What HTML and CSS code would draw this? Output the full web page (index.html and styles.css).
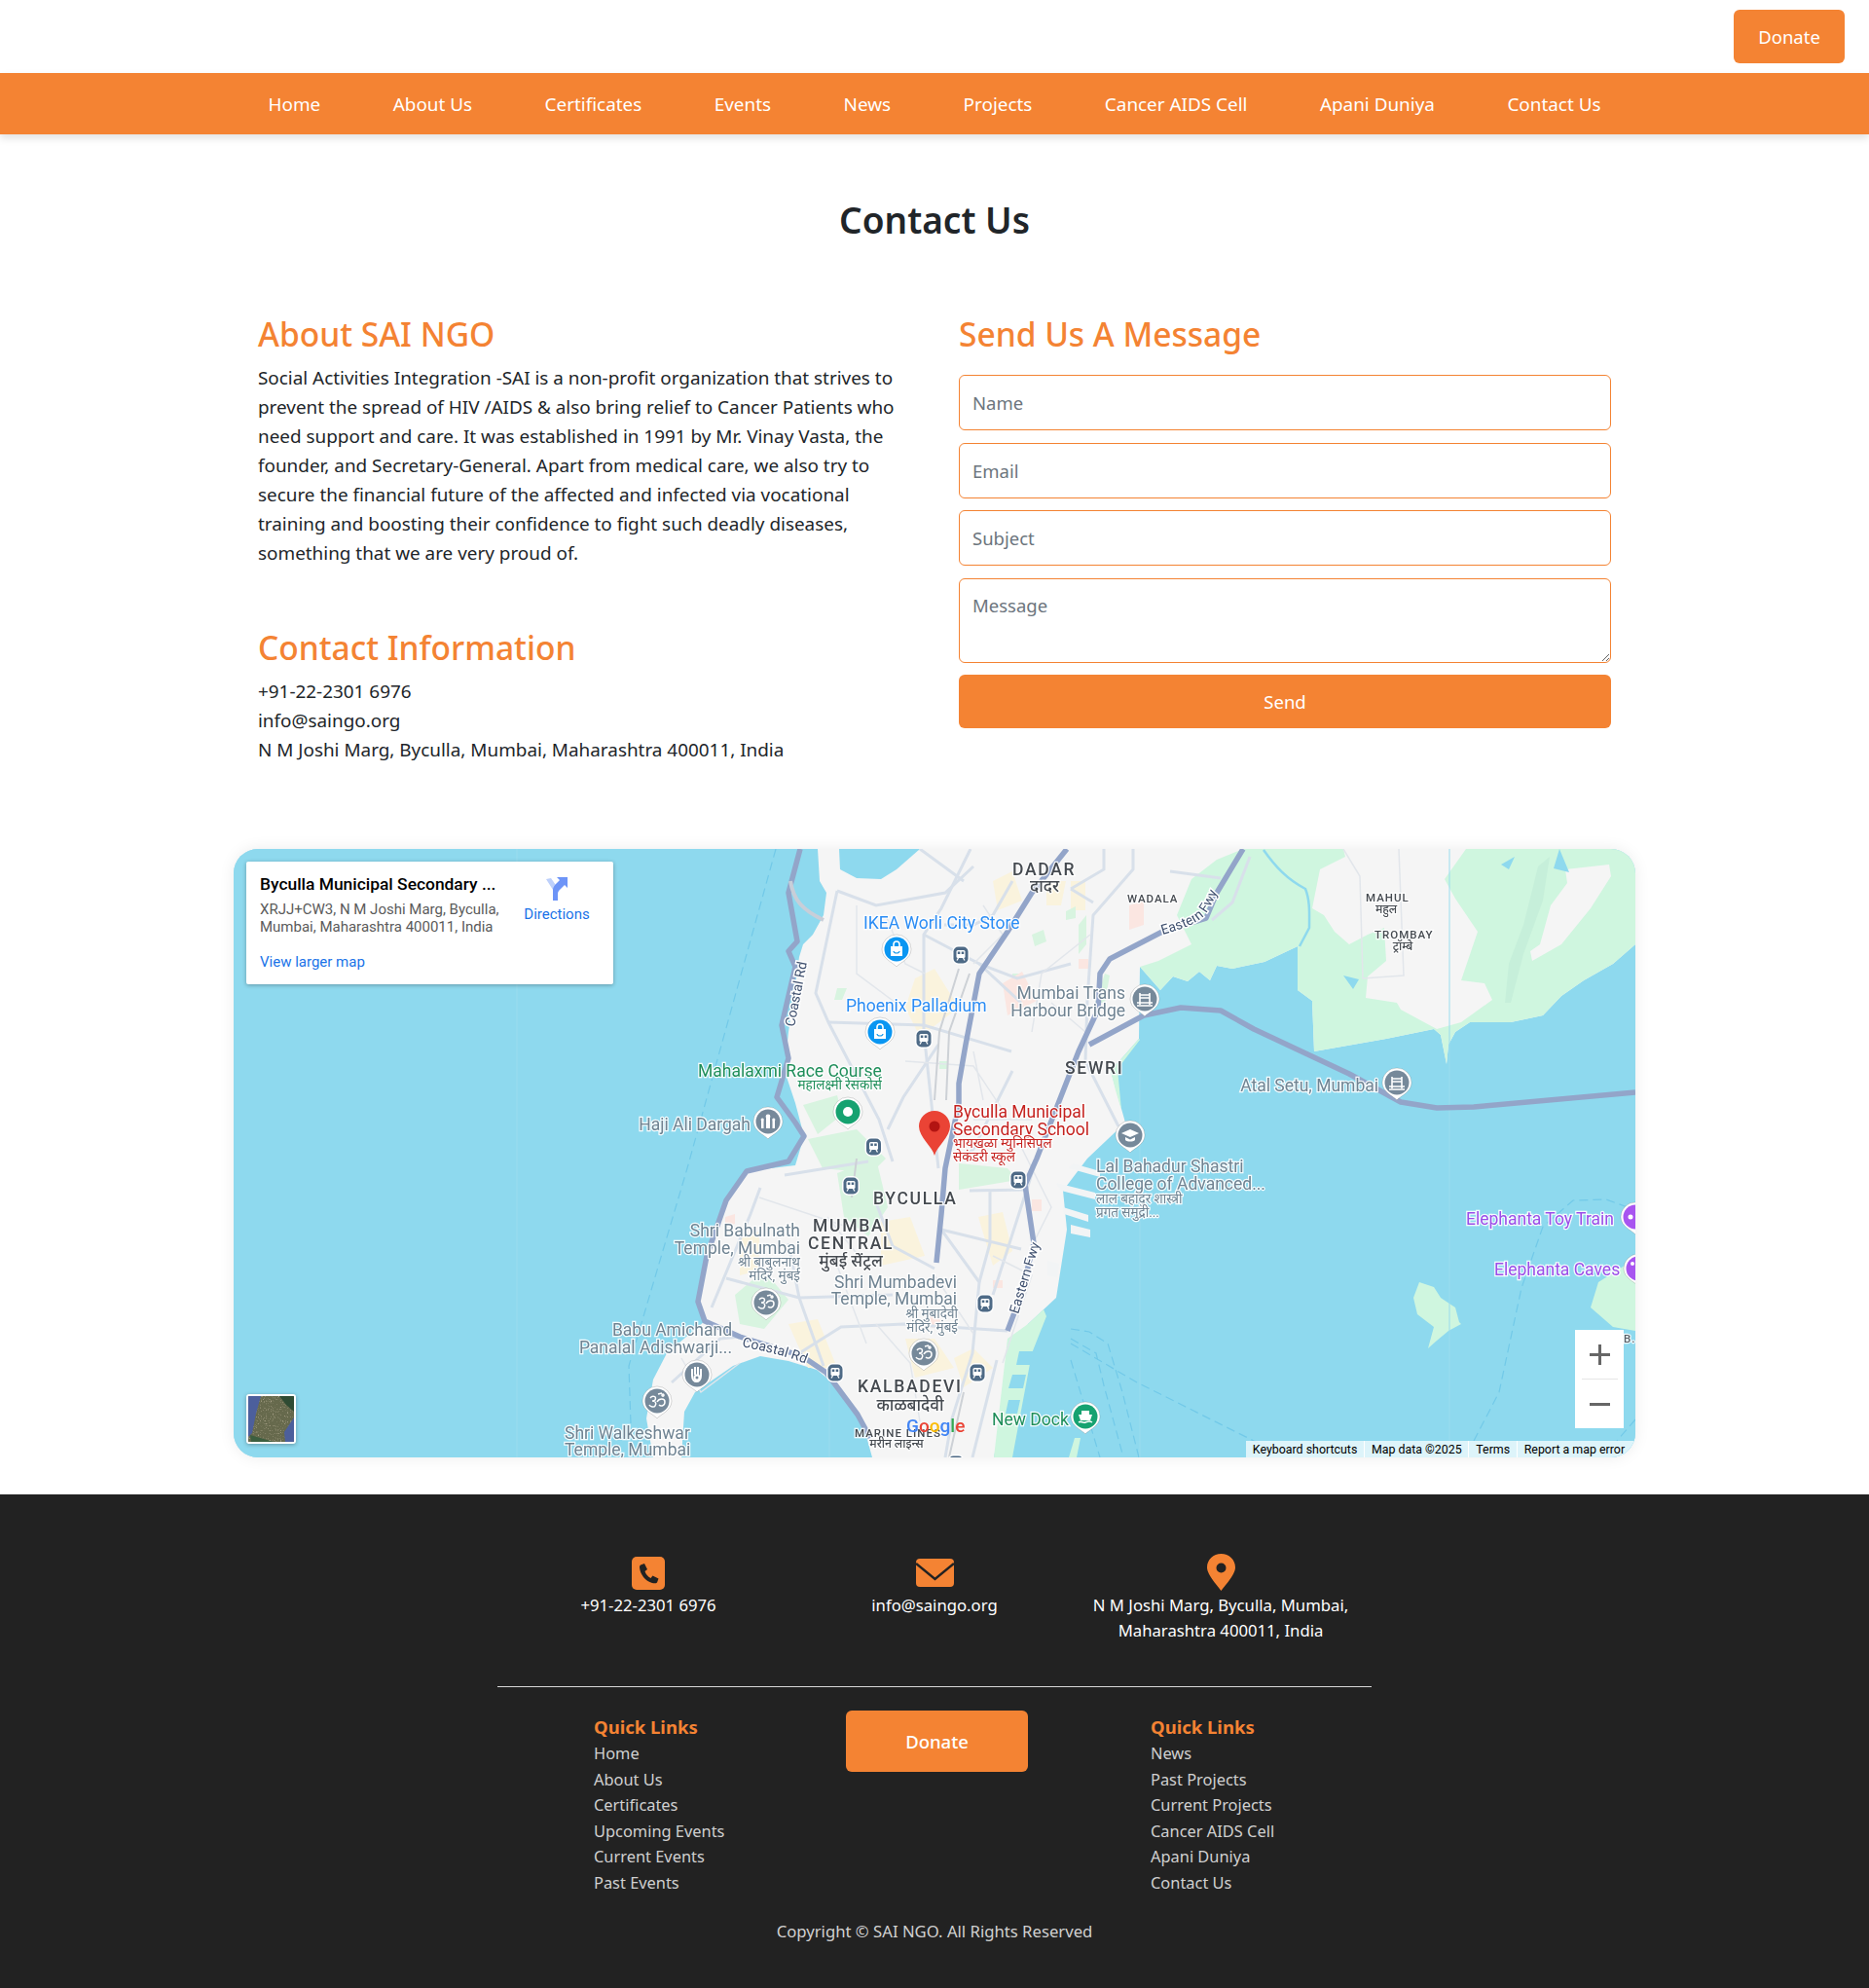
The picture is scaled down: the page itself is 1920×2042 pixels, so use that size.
FILE: index.html
```html
<!DOCTYPE html>
<html lang="en">
<head>
<meta charset="utf-8">
<title>Contact Us</title>
<link rel="stylesheet" href="styles.css">
</head>
<body>
<header class="topbar"><a class="btn btn-top" href="#">Donate</a></header>
<nav class="nav">
  <a href="#">Home</a><a href="#">About Us</a><a href="#">Certificates</a><a href="#">Events</a><a href="#">News</a><a href="#">Projects</a><a href="#">Cancer AIDS Cell</a><a href="#">Apani Duniya</a><a href="#">Contact Us</a>
</nav>
<main class="main">
  <h1 class="title">Contact Us</h1>
  <div class="cols">
    <section class="col">
      <h2 class="sec sec-l">About SAI NGO</h2>
      <p class="about">Social Activities Integration -SAI is a non-profit organization that strives to prevent the spread of HIV /AIDS &amp; also bring relief to Cancer Patients who need support and care. It was established in 1991 by Mr. Vinay Vasta, the founder, and Secretary-General. Apart from medical care, we also try to secure the financial future of the affected and infected via vocational training and boosting their confidence to fight such deadly diseases, something that we are very proud of.</p>
      <h2 class="sec sec-l sec-2">Contact Information</h2>
      <p class="info">+91-22-2301 6976<br>info@saingo.org<br>N M Joshi Marg, Byculla, Mumbai, Maharashtra 400011, India</p>
    </section>
    <section class="col">
      <h2 class="sec">Send Us A Message</h2>
      <form class="form">
        <input type="text" placeholder="Name">
        <input type="text" placeholder="Email">
        <input type="text" placeholder="Subject">
        <textarea placeholder="Message"></textarea>
        <button class="send" type="button">Send</button>
      </form>
    </section>
  </div>
  <div class="map">
    <svg class="map-svg" viewBox="240 872 1440 625" xmlns="http://www.w3.org/2000/svg">
      <defs>
        <g id="pin"><path class="pin-o" d="M0 18C-3 14-15 10-15 0a15 15 0 1 1 30 0C15 10 3 14 0 18Z"/><circle r="12.5" class="pin-c"/></g>
        <g id="transit"><rect x="-9" y="-10" width="18" height="20" rx="7" fill="#fff"/><rect x="-7.500" y="-8.500" width="15" height="17" rx="5" fill="#4e6a86"/><rect x="-4.500" y="-5" width="9" height="8" rx="1.500" fill="#fff"/><rect x="-3.200" y="-3.500" width="2.500" height="2.500" fill="#4e6a86"/><rect x=".7" y="-3.500" width="2.500" height="2.500" fill="#4e6a86"/><path d="M-2.500 3l-1.500 2.500M2.500 3l1.500 2.500" stroke="#fff" stroke-width="1.300"/></g>
        <g id="bag"><path d="M-6-3h12v10h-12z" fill="#fff"/><path d="M-3-3v-2a3 3 0 0 1 6 0v2" fill="none" stroke="#fff" stroke-width="1.600"/><path d="M-3 2a3 2 0 0 0 6 0" fill="none" stroke="#1a9ae8" stroke-width="1.200"/></g>
        <g id="om"><path d="M-7-3c2-3 7-2 5 2-1 1-2 1-3 1 3 0 5 2 3 5-1 2-5 1-6-1M0 1c2-4 8-4 8 0s-4 5-6 3M1-7l4-1M6-7a1 1 0 1 0 .01 0" fill="none" stroke="#fff" stroke-width="1.500"/></g>
        <g id="bridge"><path d="M-8 4h16M-8 7h16M-5-6v12M5-6v12M-5-4h10M-5-1h10" fill="none" stroke="#fff" stroke-width="1.600"/></g>
        <g id="temple"><path d="M-7 7V-1h2.500V7zM-2 7V-4h4V7zM4.500 7V-1h2.500V7z" fill="#fff"/><circle cy="-5" r="2.400" fill="#fff"/><circle cx="-5.800" cy="-2" r="1.600" fill="#fff"/><circle cx="5.800" cy="-2" r="1.600" fill="#fff"/></g>
        <g id="edu"><path d="M-9-2L0-6l9 4-9 4zM-5 2v3c2 2 8 2 10 0V2L0 4.500z" fill="#fff"/></g>
        <g id="hand"><path d="M-5 1V-6M-2 0V-8M1 0V-8M4 1V-6M-5 1c0 8 9 8 9 0" fill="none" stroke="#fff" stroke-width="2"/><circle cy="3" r="3.500" fill="#fff"/><circle cy="3" r="1.500" fill="#76899a"/></g>
        <g id="ferry"><path d="M-4-6h8v4h-8zM-7-2h14l-2 6h-10z" fill="#fff"/><path d="M-7 6c3-2 4 1 7 0s4-2 7 0" fill="none" stroke="#fff" stroke-width="1.500"/></g>
        <path id="fwy1" d="M1194 960 C1215 954 1232 948 1239 938 C1246 929 1250 917 1256 903"/>
        <path id="crd2" d="M762 1383 C785 1388 810 1393 830 1402"/>
      </defs>

      <rect x="240" y="872" width="1440" height="625" class="water"/>
      <path class="land" d="M840 872L842 905 849 917 846 940 835 960 825 970 821 983 815 1027 810 1060 806 1100 817 1133 826 1167 817 1197 767 1203 746 1233 728 1290 717 1337 724 1357 685 1390 671 1417 664 1457 671 1497 700 1497 703 1450 714 1430 753 1403 781 1393 810 1398 839 1407 864 1427 885 1457 896 1497 1021 1497 1039 1407 1056 1360 1085 1333 1096 1263 1092 1223 1117 1190 1156 1153 1141 1100 1170 1067 1171 993 1192 1017 1205 1003 1220 1008 1232 998 1243 1007 1250 992 1266 995 1299 988 1333 972 1333 1017 1348 1028 1350 1080 1424 1067 1473 1057 1480 1063 1486 1093 1488 1073 1495 1060 1510 1050 1552 1050 1585 1043 1604 1023 1627 1007 1657 990 1680 970 1680 872Z"/>
      <path class="water" d="M862 872L863 893 880 902 905 903 921 893 945 872Z"/>
      <path class="green" d="M1250 883L1224 903 1209 940 1224 970 1190 987 1171 993 1192 1017 1205 1003 1220 1008 1232 998 1243 1007 1250 992 1266 995 1299 988 1333 972 1333 1017 1348 1028 1350 1080 1424 1067 1473 1057 1480 1063 1486 1093 1488 1073 1495 1060 1510 1050 1552 1050 1585 1043 1604 1023 1627 1007 1657 990 1680 970 1680 872 1506 872 1484 903 1495 923 1518 957 1501 1007 1525 1010 1533 1027 1501 1050 1476 1057 1439 1037 1435 1030 1403 1025 1405 1003 1424 987 1422 953 1405 960 1386 970 1371 957 1360 940 1348 933 1356 893 1382 880 1380 872 1277 872Z"/>
      <path class="land" d="M1608 893L1653 888 1655 900 1634 933 1604 970 1574 987 1572 977 1582 970 1593 930 1610 907Z"/>
      <path class="green2" d="M1580 890L1592 880 1585 925 1565 980 1552 1030 1546 1030 1550 990 1565 950Z"/>
      <path class="green" d="M1141 1100L1170 1067 1171 1068 1148 1098 1152 1140 1146 1120Z"/>
      <path class="green" d="M1035 1375L1056 1360 1072 1345 1075 1352 1060 1390 1040 1497 1021 1497Z"/>
      <path class="water" d="M1380 1002L1396 1006 1390 1016ZM1542 888L1556 880 1550 893ZM1602 872L1612 896 1596 892Z"/>
      <path class="water-s" d="M1298 873C1310 890 1322 903 1341 913 1346 925 1345 940 1345 953L1335 972"/>
      <path class="green" d="M1458 1317L1473 1322 1480 1333 1495 1343 1499 1358 1501 1360 1488 1367 1476 1377 1467 1385 1473 1363 1456 1350 1452 1333ZM1680 1293L1642 1317 1634 1343 1657 1363 1680 1367Z"/>
      <path class="green" d="M1098 1497l6-20 6 0-4 20z"/>

      <path class="pier" d="M1085 1215l40 10v7l-35-9zM1092 1240l26 8v7l-25-8zM1102 1195l28 8v6l-32-9zM1100 1258l20 5v8l-20-4zM1076 1295l12 3-2 14-10-2z"/>
      <path class="water" d="M1047 1388h16l-3 14h-16zM1040 1412h14l-3 14h-15zM1036 1438h12l-3 14h-12z"/>
      <path class="dash" d="M797 872L706 1200 646 1403 649 1493M1514 1480L1540 1430 1563 1323 1585 1260 1616 1233 1650 1232 1680 1243M1100 1365L1119 1368 1138 1380 1153 1430 1170 1497M1100 1375L1126 1390 1134 1423 1153 1493M1100 1380L1168 1420 1288 1480 1310 1490M1100 1397L1130 1497M1680 1458L1661 1480"/>
      <path class="tile" d="M531 872V1497M1171 1100V1497M1489 872V1497M852 1420V1497"/>

      <path class="yellow" d="M1020 905l20-10 10 30-25 10zM940 1005l20-10 25 40-40 30-15-30zM1075 905l20 0-5 25-15 0zM1100 905l15 0 0 30-15 0zM905 1255l30-5 15 40-45 10zM1005 1250l25-5 10 40-20 15zM930 1375l30 0 20 30-40 10zM980 1395l20-10 20 20-30 20z M810 1360l30-5 20 50-30 0z M760 1270l20-5 0 40-20 5z"/>
      <path class="park" d="M1060 960l12-5 3 12-12 5zM1095 936l10-5 0 12-10 2zM1040 1000l8 0 0 10-8 2zM860 1015l10 0-5 12-8 0zM825 1135l35-10 5 20-25 20zM830 1170l50-10 30 30-15 15-50-5zM860 1205l40-15 12 50-20 30-25-20zM755 1330l30-25 25 30-25 30-25-5zM985 1195l50 5 10 12-60 10zM1135 1000l-10 30 10 0 5-28zM1108 950l8-10 0 30-8 10zM965 1090l8 0 0 8-8 0z"/>
      <path class="pink" d="M1030 1010l20-12 15 30-30 15zM1160 930l15-5 0 25-15 5zM745 1250l10-3 0 10-10 3zM1060 1232l10 0 0 12-10 0zM955 1350l10 0 2 14-10 0z M1020 1315l10 0 0 8-10 0z M1108 985l10 0 0 10-10 0z"/>

      <g class="roads">
        <path d="M860 915L838 1020 851 1050 903 1150 917 1193"/>
        <path d="M860 915L900 930 971 917 1000 890"/>
        <path d="M997 872L967 933 949 960 949 1060 964 1200"/>
        <path d="M949 960L1006 990 1049 1030"/>
        <path d="M851 1050L949 1053 1039 1080"/>
        <path d="M1006 990L1045 1005 1100 990"/>
        <path d="M964 1073L928 1127 912 1160"/>
        <path d="M806 1207L892 1193M781 1220L771 1247 731 1343"/>
        <path d="M810 1277L821 1333 846 1403M746 1313L821 1333 917 1330"/>
        <path d="M821 1390L864 1363 928 1360 1035 1367"/>
        <path d="M899 1233L917 1280 960 1303M967 1263L1006 1317 999 1390 978 1457 971 1497"/>
        <path d="M996 1223L1053 1222M1017 1223L1017 1277 1006 1317M967 1263L1049 1283M1024 1397L999 1497"/>
        <path d="M1134 872V893L1100 913M1202 895L1254 902M1164 872V893L1123 940 1117 1027 1115 1090 1149 1157"/>
        <path d="M1123 927L1100 913M1284 880L1266 927 1245 945"/>
        <path d="M1040 1100L1000 1180 990 1190M1065 1190L1020 1330M690 1420L740 1375 760 1373"/>
        <path d="M945 872L990 905M1040 905L1020 940 1000 950 970 950"/>
      </g>
      <g class="roads-thin">
        <path d="M880 930L880 1000 920 1030M910 940L930 990 950 1000M1010 930L1030 960 1000 990M1060 1060L1070 1000 1120 960M1000 1080L1010 1130M930 1090L1000 1095 1030 1140M780 1230L870 1260M850 1250L890 1300M860 1300L890 1380M960 1310L1000 1370M1050 1180L1080 1240 1060 1280M1020 1290L1060 1310 1030 1400M700 1395L720 1430 760 1400M1380 872L1397 900 1400 1005 1442 1002 1437 872M1080 1030L1115 1060M900 1360L935 1400 945 1460M1000 1150L1060 1150"/>
      </g>
      <g class="rail">
        <path d="M985 995L965 1060 960 1130M996 1000L975 1060 972 1130M880 1190L875 1230M990 1430L975 1497"/>
      </g>

      <g class="hwy">
        <path d="M822 872L810 917 819 967 810 977 817 993 803 1053 810 1087 798 1127 817 1153 826 1167 810 1193 767 1203 746 1233 726 1290 717 1337 724 1357 760 1373 824 1393 849 1410 881 1453 894 1477"/>
        <path d="M1096 872L1060 917 1035 957 1006 1000 992 1073 985 1113 985 1133 971 1200 967 1247 962 1297"/>
        <path d="M1277 872L1250 917 1239 943 1194 957 1140 985 1130 1000 1128 1037 1108 1080 1065 1190 1053 1217 1062 1277 1049 1330 1035 1367"/>
        <path d="M1119 1073L1175 1043 1213 1035 1254 1038 1288 1057 1386 1103 1439 1132 1476 1138 1514 1137 1680 1122"/>
      </g>
      <path class="hwy-l" d="M812 905C815 925 825 935 846 945"/>

      <g class="lbl-area">
        <text x="1040" y="899" class="a16">DADAR</text>
        <text x="1073" y="916" class="a16d mid">दादर</text>
        <text x="1094" y="1103" class="a16">SEWRI</text>
        <text x="897" y="1237" class="a16">BYCULLA</text>
        <text x="835" y="1265" class="a16">MUMBAI</text>
        <text x="830" y="1283" class="a16">CENTRAL</text>
        <text x="874" y="1301" class="a16d mid">मुंबई सेंट्रल</text>
        <text x="881" y="1430" class="a16">KALBADEVI</text>
        <text x="935" y="1449" class="a16d mid">काळबादेवी</text>
        <text x="878" y="1476" class="a12">MARINE LINES</text>
        <text x="921" y="1487" class="a12d mid">मरीन लाइन्स</text>
        <text x="1158" y="927" class="a12">WADALA</text>
        <text x="1403" y="926" class="a12">MAHUL</text>
        <text x="1424" y="938" class="a12d mid">महुल</text>
        <text x="1412" y="964" class="a12">TROMBAY</text>
        <text x="1441" y="976" class="a12d mid">ट्रॉम्बे</text>
      </g>

      <g class="lbl-road">
        <text transform="translate(816 1055) rotate(-79)">Coastal Rd</text>
        <text><textPath href="#crd2">Coastal Rd</textPath></text>
        <text><textPath href="#fwy1">Eastern Fwy</textPath></text>
        <text transform="translate(1046 1350) rotate(-73)">Eastern Fwy</text>
      </g>

      <g class="lbl lbl-grey">
        <text x="1156" y="1026" class="end">Mumbai Trans</text>
        <text x="1156" y="1044" class="end">Harbour Bridge</text>
        <text x="771" y="1161" class="end">Haji Ali Dargah</text>
        <text x="1416" y="1121" class="end">Atal Setu, Mumbai</text>
        <text x="1126" y="1204">Lal Bahadur Shastri</text>
        <text x="1126" y="1222">College of Advanced...</text>
        <text x="1126" y="1236" class="d13">लाल बहादुर शास्त्री</text>
        <text x="1126" y="1250" class="d13">प्रगत समुद्री...</text>
        <text x="822" y="1270" class="end">Shri Babulnath</text>
        <text x="822" y="1288" class="end">Temple, Mumbai</text>
        <text x="822" y="1301" class="end d13">श्री बाबुलनाथ</text>
        <text x="822" y="1315" class="end d13">मंदिर, मुंबई</text>
        <text x="983" y="1323" class="end">Shri Mumbadevi</text>
        <text x="983" y="1340" class="end">Temple, Mumbai</text>
        <text x="984" y="1354" class="end d13">श्री मुंबादेवी</text>
        <text x="984" y="1368" class="end d13">मंदिर, मुंबई</text>
        <text x="752" y="1372" class="end">Babu Amichand</text>
        <text x="752" y="1390" class="end">Panalal Adishwarji...</text>
        <text x="580" y="1478">Shri Walkeshwar</text>
        <text x="580" y="1495">Temple, Mumbai</text>
      </g>
      <g class="lbl lbl-blue">
        <text x="887" y="954">IKEA Worli City Store</text>
        <text x="869" y="1039">Phoenix Palladium</text>
      </g>
      <g class="lbl lbl-green">
        <text x="717" y="1106">Mahalaxmi Race Course</text>
        <text x="906" y="1119" class="end d13">महालक्ष्मी रेसकोर्स</text>
        <text x="1019" y="1464">New Dock</text>
      </g>
      <g class="lbl lbl-red">
        <text x="979" y="1148">Byculla Municipal</text>
        <text x="979" y="1166">Secondary School</text>
        <text x="979" y="1179" class="d13">भायखळा म्युनिसिपल</text>
        <text x="979" y="1193" class="d13">सेकंडरी स्कूल</text>
      </g>
      <g class="lbl lbl-purple">
        <text x="1506" y="1258">Elephanta Toy Train</text>
        <text x="1535" y="1310">Elephanta Caves</text>
      </g>
      <text x="1668" y="1379" class="a12">B.</text>

      <use href="#pin" x="921" y="975" class="c-blue"/><use href="#bag" x="921" y="975"/>
      <use href="#pin" x="904" y="1060" class="c-blue"/><use href="#bag" x="904" y="1060"/>
      <use href="#pin" x="871" y="1142" class="c-green"/><circle cx="871" cy="1142" r="5" fill="#fff"/>
      <use href="#pin" x="789" y="1152" class="c-grey"/><use href="#temple" x="789" y="1152"/>
      <use href="#pin" x="1176" y="1026" class="c-grey"/><use href="#bridge" x="1176" y="1026"/>
      <use href="#pin" x="1435" y="1112" class="c-grey"/><use href="#bridge" x="1435" y="1112"/>
      <use href="#pin" x="1161" y="1166" class="c-grey"/><use href="#edu" x="1161" y="1166"/>
      <use href="#pin" x="787" y="1338" class="c-grey"/><use href="#om" x="787" y="1338"/>
      <use href="#pin" x="949" y="1390" class="c-grey"/><use href="#om" x="949" y="1390"/>
      <use href="#pin" x="716" y="1412" class="c-grey"/><use href="#hand" x="716" y="1412"/>
      <use href="#pin" x="675" y="1439" class="c-grey"/><use href="#om" x="675" y="1439"/>
      <use href="#pin" x="1115" y="1455" class="c-green"/><use href="#ferry" x="1115" y="1455"/>
      <use href="#pin" x="1680" y="1250" class="c-purple"/><circle cx="1675" cy="1250" r="2.500" fill="#fff"/>
      <use href="#pin" x="1683" y="1303" class="c-purple"/><circle cx="1677" cy="1298" r="2" fill="#fff"/>
      <use href="#transit" x="987" y="981"/><use href="#transit" x="949" y="1067"/><use href="#transit" x="897.500" y="1178"/><use href="#transit" x="874" y="1218"/><use href="#transit" x="1046" y="1212"/><use href="#transit" x="1012" y="1339"/><use href="#transit" x="1004" y="1410"/><use href="#transit" x="858" y="1410"/><use href="#transit" x="982" y="1504"/>

      <path d="M960 1187C958 1178 944 1168 944 1157a16 16 0 0 1 32 0C976 1168 962 1178 960 1187Z" fill="#ea4335"/>
      <circle cx="960" cy="1157" r="5.500" fill="#b31412"/>

      <text x="931" y="1471" class="google"><tspan fill="#4285f4">G</tspan><tspan fill="#ea4335">o</tspan><tspan fill="#fbbc05">o</tspan><tspan fill="#4285f4">g</tspan><tspan fill="#34a853">l</tspan><tspan fill="#ea4335">e</tspan></text>
    </svg>

    <div class="card">
      <div class="card-main">
        <div class="card-title">Byculla Municipal Secondary ...</div>
        <div class="card-addr">XRJJ+CW3, N M Joshi Marg, Byculla, Mumbai, Maharashtra 400011, India</div>
        <a class="card-link" href="#">View larger map</a>
      </div>
      <div class="card-dir">
        <svg width="24" height="24" viewBox="0 0 24 24"><path d="M1 2l5-1 7 10v13H8V13z" fill="#bdd0fb"/><path d="M8 24V13c0-3 2-5 4-7l3-3-3-3h11v11l-3-3-4 4c-2 2-3 3-3 5v10z" fill="#6d94f7"/></svg>
        <a href="#">Directions</a>
      </div>
    </div>
    <div class="thumb">
      <svg width="47" height="47" viewBox="0 0 47 47"><defs><filter id="sat" x="0" y="0" width="100%" height="100%"><feTurbulence baseFrequency=".6" numOctaves="2" seed="4" result="n"/><feColorMatrix in="n" values="0 0 0 0 .72  0 0 0 0 .62  0 0 0 0 .48  0 0 0 1.400 -.45"/></filter></defs><rect width="47" height="47" fill="#66694c"/><rect width="47" height="47" filter="url(#sat)"/><path d="M0 0h13L8 18 4 38 0 42z" fill="#4c5f9c"/><path d="M47 22v25H38l-1-10z" fill="#4c5f9c"/><path d="M32 0h15v16l-8-7z" fill="#2f4b33"/><path d="M2 40l24 7H3z" fill="#3c5e3f"/></svg>
    </div>
    <div class="zoom"><span class="z-btn z-plus"></span><span class="z-sep"></span><span class="z-btn z-minus"></span></div>
    <div class="attr"><span>Keyboard shortcuts</span><span>Map data ©2025</span><span>Terms</span><span>Report a map error</span></div>
  </div>
</main>
<footer class="footer">
  <div class="f-contact">
    <div class="f-item">
      <svg class="f-ic" width="34" height="34" viewBox="0 0 34 34"><rect width="34" height="34" rx="5" fill="#f48333"/><path d="M9 8.500l4-1.500 3 6-2.500 2c1 3 3 5.500 6 7l2-2.500 6 3-1.500 4c-1 1-3 1-5 .5C14 25 8.500 18 8 11c0-1 .3-2 1-2.500z" fill="#222"/></svg>
      <span>+91-22-2301 6976</span>
    </div>
    <div class="f-item">
      <svg class="f-ic" width="39" height="34" viewBox="0 0 39 34"><g transform="translate(0 2)"><rect width="39" height="29" rx="4" fill="#f48333"/><path d="M0 5l19.500 16L39 5" fill="none" stroke="#222" stroke-width="2.500"/></g></svg>
      <span>info@saingo.org</span>
    </div>
    <div class="f-item">
      <svg class="f-ic f-pin" width="29" height="38" viewBox="0 0 29 38"><path fill-rule="evenodd" d="M14.500 0C6.500 0 0 6 0 14c0 8 12 20 14.500 24C17 34 29 22 29 14 29 6 22.500 0 14.500 0zm0 9.500a5 5 0 1 1 0 10 5 5 0 0 1 0-10z" fill="#f48333"/></svg>
      <span>N M Joshi Marg, Byculla, Mumbai,<br>Maharashtra 400011, India</span>
    </div>
  </div>
  <hr class="f-hr">
  <div class="f-links">
    <div class="f-col">
      <h3>Quick Links</h3>
      <a href="#">Home</a><a href="#">About Us</a><a href="#">Certificates</a><a href="#">Upcoming Events</a><a href="#">Current Events</a><a href="#">Past Events</a>
    </div>
    <a class="btn btn-foot" href="#">Donate</a>
    <div class="f-col">
      <h3>Quick Links</h3>
      <a href="#">News</a><a href="#">Past Projects</a><a href="#">Current Projects</a><a href="#">Cancer AIDS Cell</a><a href="#">Apani Duniya</a><a href="#">Contact Us</a>
    </div>
  </div>
  <p class="copy">Copyright © SAI NGO. All Rights Reserved</p>
</footer>
</body>
</html>
```
FILE: styles.css
```css
* { box-sizing: border-box; }
html, body { margin: 0; padding: 0; }
body {
  font-family: "Noto Sans", "Open Sans", sans-serif;
  font-size: 18.900px;
  line-height: 30px;
  color: #212529;
  background: #fff;
}
a { color: inherit; text-decoration: none; }

.topbar { height: 75px; display: flex; justify-content: flex-end; align-items: flex-start; padding: 10px 25px 0 0; }
.btn { background: #f48333; color: #fff; border-radius: 6px; display: flex; align-items: center; justify-content: center; }
.btn-top { width: 114px; height: 55px; font-size: 18.500px; }

.nav {
  height: 63px;
  background: #f48333;
  box-shadow: 0 4px 8px rgba(0,0,0,.12);
  display: flex;
  justify-content: center;
  align-items: center;
  gap: 74.500px;
  color: #fff;
  position: relative;
}

.main { padding: 0 240px 38px; }
.title { margin: 0; padding-top: 65px; height: 182px; line-height: 46px; text-align: center; font-size: 37px; font-weight: 600; }
.cols { display: grid; grid-template-columns: 1fr 1fr; gap: 50px; padding: 0 25px; height: 552px; }
.sec { margin: 0; font-size: 33.500px; line-height: 46px; font-weight: 500; color: #f48333; height: 65px; }
.sec-l { height: 53px; }
.about { margin: 0; }
.sec-2 { margin-top: 59px; }
.info { margin: 0; }

.form { display: flex; flex-direction: column; font-size: 18.500px; }
.form input, .form textarea {
  font: inherit;
  border: 1px solid #f48333;
  border-radius: 6px;
  padding: 0 13px;
  width: 100%;
  height: 57px;
  margin-bottom: 12.700px;
  background: #fff;
  color: #212529;
}
.form textarea { height: 87px; padding-top: 12px; resize: vertical; margin-bottom: 12px; display: block; }
.form ::placeholder { color: #6c757d; opacity: 1; }
.send { font: inherit; border: 0; height: 55px; border-radius: 6px; background: #f48333; color: #fff; }

.map { position: relative; height: 625px; border-radius: 25px; overflow: hidden; box-shadow: 0 0 16px rgba(0,0,0,.08); background: #8ed9ee; }
.map-svg { display: block; width: 1440px; height: 625px; font-family: Roboto, "Noto Sans", sans-serif; filter: blur(.35px); }
.water { fill: #8ed9ee; }
.water-s { fill: none; stroke: #8ed9ee; stroke-width: 2.500; }
.land { fill: #f5f5f5; }
.green { fill: #cff6df; }
.green2 { fill: #c6efda; }
.pier { fill: #f2f4f5; }
.dash { fill: none; stroke: #72c9e8; stroke-width: 1.200; stroke-dasharray: 9 5; }
.tile { fill: none; stroke: #9adcee; stroke-width: 1; }
.yellow { fill: #faf3dd; }
.park { fill: #d8f4e0; }
.pink { fill: #fbe6e1; }
.roads path { fill: none; stroke: #d8e0ea; stroke-width: 3; }
.roads-thin path { fill: none; stroke: #e2e6eb; stroke-width: 1.500; }
.rail path { fill: none; stroke: #cdd1d6; stroke-width: 2; }
.hwy path { fill: none; stroke: #93a5c9; stroke-width: 5.500; stroke-linejoin: round; }
.hwy-l { fill: none; stroke: #c8ced8; stroke-width: 4; }

.lbl-area text, .a12 { font-weight: 500; fill: #454a50; paint-order: stroke; stroke: rgba(255,255,255,.85); stroke-width: 2.500px; }
.a16 { font-size: 17.500px; letter-spacing: 1.700px; }
.a16d { font-size: 17px; font-weight: 700; }
.a12 { font-size: 11.500px; letter-spacing: 1px; fill: #5a5f66; }
.a12d { font-size: 12px; fill: #5a5f66; }
.mid { text-anchor: middle; }
.end { text-anchor: end; }
.lbl-road text { font-size: 14px; fill: #3e4f6e; paint-order: stroke; stroke: #fff; stroke-width: 3px; }
.lbl text { font-size: 17.500px; paint-order: stroke; stroke: #fff; stroke-width: 2.500px; stroke-opacity: .9; }
.lbl .d13 { font-size: 13.500px; }
.lbl-grey text { fill: #6f8392; }
.lbl-blue text { fill: #2a8cf4; }
.lbl-green text { fill: #1f8e5a; }
.lbl-red text { fill: #c5221f; }
.lbl-purple text { fill: #9b4de8; }
.pin-o { fill: #fff; stroke: rgba(0,0,0,.15); stroke-width: 1; }
.pin-c { fill: currentColor; }
.c-blue { color: #0a96f2; }
.c-green { color: #16a270; }
.c-grey { color: #76899a; }
.c-purple { color: #a855f0; }
.google { font-size: 19px; font-weight: 500; }

.card {
  position: absolute; left: 13px; top: 13px; width: 377px; height: 126px;
  background: #fff; border-radius: 2px; box-shadow: 0 1px 4px rgba(0,0,0,.3);
  padding: 10px 14px;
  font-family: Roboto, sans-serif;
  display: flex;
  justify-content: space-between;
}
.card-main { width: 252px; }
.card-title { font-size: 17.400px; font-weight: 500; color: #000; line-height: 26px; white-space: nowrap; }
.card-addr { font-size: 15px; line-height: 18px; color: #5b5b5b; margin-top: 4px; width: 260px; }
.card-link { display: block; font-size: 15px; line-height: 18px; color: #1a73e8; margin-top: 18px; }
.card-dir { width: 70px; margin-right: 9px; text-align: center; font-size: 15px; line-height: 18px; color: #1a73e8; padding-top: 6px; }
.card-dir svg { display: block; margin: 0 auto 5px; }

.thumb {
  position: absolute; left: 13px; top: 560px; width: 51px; height: 51px;
  border: 2px solid #fff; border-radius: 3px; box-shadow: 0 1px 4px rgba(0,0,0,.3);
  background: #66694c; overflow: hidden;
}
.thumb svg { display: block; }
.zoom { position: absolute; right: 12px; top: 494px; width: 50px; height: 101px; background: #fff; display: flex; flex-direction: column; align-items: center; }
.z-btn { position: relative; width: 100%; flex: 1; }
.z-sep { width: 37px; height: 1px; background: #e6e6e6; }
.z-plus::before, .z-minus::before { content: ""; position: absolute; left: 14.500px; top: 24px; width: 21px; height: 3px; background: #666; }
.z-plus::after { content: ""; position: absolute; left: 23.500px; top: 15px; width: 3px; height: 21px; background: #666; }
.z-minus::before { top: 24px; }
.attr {
  position: absolute; right: 0; bottom: 0; height: 17px; width: 400px;
  background: rgba(255,255,255,.7);
  font: 12.400px/17px Roboto, sans-serif; color: #000;
  display: flex;
}
.attr span { padding: 0 6.800px; border-left: 1px solid #fff; white-space: nowrap; }
.attr span:first-child { border: 0; }

.footer { background: #222; height: 507px; padding-top: 61px; color: #fff; }
.f-contact { width: 882px; margin: 0 auto; display: grid; grid-template-columns: repeat(3, 294px); font-size: 16.700px; line-height: 26px; text-align: center; }
.f-item { display: flex; flex-direction: column; align-items: center; }
.f-ic { display: block; height: 38px; margin-bottom: 2px; padding-top: 2px; }
.f-pin { padding-top: 0; }
.f-hr { width: 898px; margin: 44px auto 0; border: 0; border-top: 1px solid #d8d8d8; }
.f-links { width: 898px; margin: 24px auto 0; padding-left: 99px; display: grid; grid-template-columns: 259px 313px 1fr; }
.f-col { display: flex; flex-direction: column; font-size: 16.400px; line-height: 26.500px; color: #d0d0d0; }
.f-col h3 { margin: 0; padding-top: 2px; font-size: 18.500px; line-height: 29px; font-weight: 700; color: #f48333; }
.btn-foot { width: 187px; height: 63px; font-weight: 500; font-size: 18.500px; }
.copy { margin: 24px 0 0; text-align: center; font-size: 16.700px; line-height: 26px; color: #d0d0d0; }
```
